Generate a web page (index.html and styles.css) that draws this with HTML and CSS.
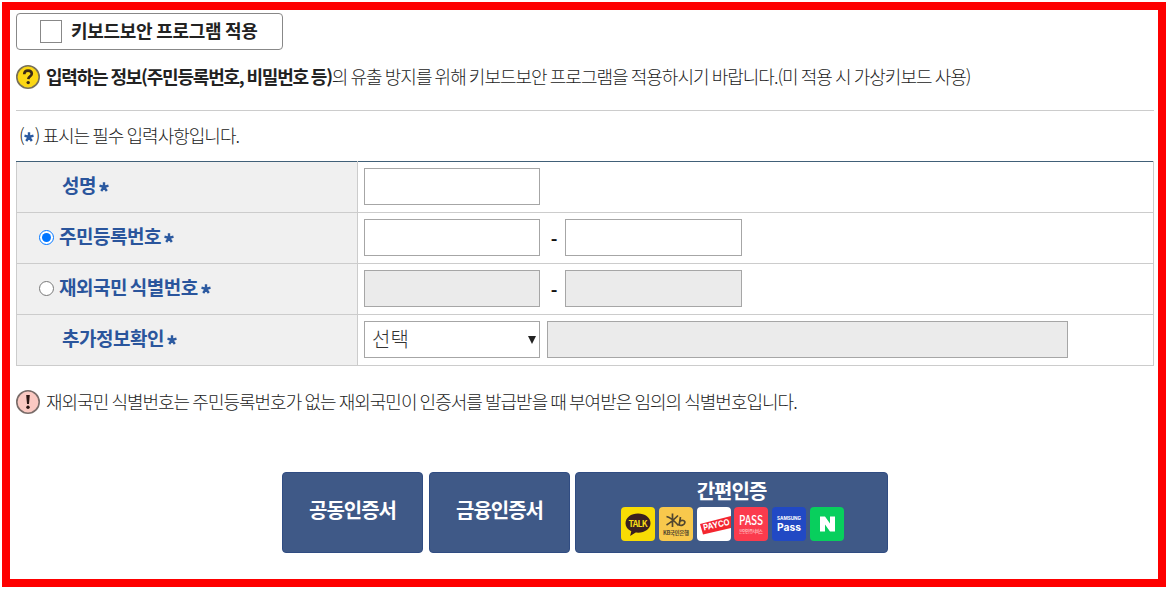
FILE: index.html
```html
<!DOCTYPE html>
<html lang="ko">
<head>
    <meta charset="UTF-8">
    <meta name="viewport" content="width=device-width, initial-scale=1.0">
    <title>본인확인</title>
    <link rel="stylesheet" href="styles.css">
</head>
<body>
    <div class="container">
        <!-- 키보드보안 -->
        <label class="security">
            <input type="checkbox" class="check">
            <span>키보드보안 프로그램 적용</span>
        </label>
        <div class="notice">
            <svg class="mark" viewBox="0 0 24 24">
                <circle cx="12" cy="12" r="11.2" fill="#fcd814" stroke="#77705a" stroke-width="1.6"/>
                <path d="M8.2 9.2C8.3 6.8 9.8 5.6 12 5.6c2.3 0 3.8 1.3 3.8 3.2 0 2.5-3.3 2.6-3.5 5.4" fill="none" stroke="#3a2a18" stroke-width="2.6"/>
                <circle cx="12.2" cy="17.6" r="1.7" fill="#3a2a18"/>
            </svg>
            <p><strong>입력하는 정보(주민등록번호, 비밀번호 등)</strong>의 유출 방지를 위해 키보드보안 프로그램을 적용하시기 바랍니다.(미 적용 시 가상키보드 사용)</p>
        </div>

        <p class="required">(<svg class="star" viewBox="0 0 10 10"><path d="M5 5V.3M5 5L.5 3.7M5 5l4.5-1.3M5 5L2.2 9M5 5l2.8 4"/></svg>) 표시는 필수 입력사항입니다.</p>

        <!-- 입력 폼 -->
        <table class="form">
            <tr>
                <th class="indent"><span>성명</span><svg class="star" viewBox="0 0 10 10"><path d="M5 5V.3M5 5L.5 3.7M5 5l4.5-1.3M5 5L2.2 9M5 5l2.8 4"/></svg></th>
                <td><div class="fields"><input type="text" class="field"></div></td>
            </tr>
            <tr>
                <th><label><input type="radio" name="idType" class="radio" checked><span>주민등록번호</span><svg class="star" viewBox="0 0 10 10"><path d="M5 5V.3M5 5L.5 3.7M5 5l4.5-1.3M5 5L2.2 9M5 5l2.8 4"/></svg></label></th>
                <td><div class="fields"><input type="text" class="field"><span class="dash">-</span><input type="text" class="field last"></div></td>
            </tr>
            <tr>
                <th><label><input type="radio" name="idType" class="radio"><span>재외국민 식별번호</span><svg class="star" viewBox="0 0 10 10"><path d="M5 5V.3M5 5L.5 3.7M5 5l4.5-1.3M5 5L2.2 9M5 5l2.8 4"/></svg></label></th>
                <td><div class="fields"><input type="text" class="field" disabled><span class="dash">-</span><input type="text" class="field last" disabled></div></td>
            </tr>
            <tr>
                <th class="indent"><span>추가정보확인</span><svg class="star" viewBox="0 0 10 10"><path d="M5 5V.3M5 5L.5 3.7M5 5l4.5-1.3M5 5L2.2 9M5 5l2.8 4"/></svg></th>
                <td><div class="fields">
                    <button type="button" class="field select"><span>선택</span><svg width="8" height="8" viewBox="0 0 8 8"><path d="M0 0h8L4 8z" fill="#222"/></svg></button>
                    <input type="text" class="field wide" disabled>
                </div></td>
            </tr>
        </table>

        <div class="notice info">
            <svg class="mark" viewBox="0 0 24 24">
                <circle cx="12" cy="12" r="11.2" fill="#fbc9c2" stroke="#796c69" stroke-width="1.6"/>
                <path d="M10.2 5h3.6l-.8 9h-2z" fill="#2b1512"/>
                <circle cx="12" cy="17.2" r="1.7" fill="#2b1512"/>
            </svg>
            <p>재외국민 식별번호는 주민등록번호가 없는 재외국민이 인증서를 발급받을 때 부여받은 임의의 식별번호입니다.</p>
        </div>

        <!-- 인증 버튼 -->
        <div class="buttons">
            <button type="button" class="btn">공동인증서</button>
            <button type="button" class="btn">금융인증서</button>
            <button type="button" class="btn simple">
                <span>간편인증</span>
                <span class="logos">
                    <svg class="logo talk" viewBox="0 0 34 34">
                        <path d="M17 6.5c-7 0-12.5 4.2-12.5 9.7 0 3.6 2.2 6.4 5.8 8l-1.2 4.9 5.6-3.6c8.3 1 14.8-3.4 14.800-9.300 0-5.500-5.500-9.700-12.500-9.700z" fill="#3a2020"/>
                        <text x="17" y="19.5" font-size="8.5" textLength="19" fill="#f8dc18">TALK</text>
                    </svg>
                    <svg class="logo kb" viewBox="0 0 34 34">
                        <path d="M13.5 6.5v13.5M7.5 9.5c4 1 8 4.5 12 9M19 8.5c-3 3-7 7-11.5 9.5M21.500 10l-1.500 8.500M20.500 14.500c2.500-2 5.800-1.200 5.300 1.300s-3.800 3-5.800 2.200" fill="none" stroke="#51462f" stroke-width="1.7"/>
                        <text x="17" y="28" font-size="5.5" textLength="26" fill="#51462f">KB국민은행</text>
                    </svg>
                    <svg class="logo payco" viewBox="0 0 34 34">
                        <path d="M3 17L38 8v12L6 27.5z" fill="#f4262f"/>
                        <text class="latin" x="19.500" y="20.500" font-size="8.500" textLength="27" lengthAdjust="spacingAndGlyphs" transform="rotate(-13 20 18)" fill="#fff">PAYCO</text>
                    </svg>
                    <svg class="logo pass" viewBox="0 0 34 34">
                        <text class="medium" x="17" y="18" font-size="12.5" textLength="24" lengthAdjust="spacingAndGlyphs" fill="#fff">PASS</text>
                        <text class="medium" x="17" y="25.5" font-size="4.5" textLength="24" fill="#ffc4c8">본인인증서비스</text>
                    </svg>
                    <svg class="logo samsung" viewBox="0 0 34 34">
                        <text class="latin" x="17" y="13" font-size="4.5" textLength="24" lengthAdjust="spacingAndGlyphs" fill="#fff">SAMSUNG</text>
                        <text class="latin" x="17" y="24" font-size="10" textLength="24" lengthAdjust="spacingAndGlyphs" fill="#fff">Pass</text>
                    </svg>
                    <svg class="logo naver" viewBox="0 0 34 34">
                        <path d="M10 24.5v-15h5l5 7v-7h5v15h-5l-5-7v7z" fill="#fff"/>
                    </svg>
                </span>
            </button>
        </div>
    </div>
</body>
</html>
```
FILE: styles.css
```css
* {
    box-sizing: border-box;
}
body {
    margin: 0;
    padding: 2px;
    background: #fff;
    color: #222;
    font-family: "Noto Sans CJK KR", sans-serif;
    font-size: 18px;
    font-weight: 300;
    letter-spacing: -1px;
    word-spacing: -0.9px;
}
p {
    margin: 0;
}
.container {
    width: 1164px;
    height: 585px;
    padding: 3px 4px 0 6px;
    border: 8px solid #fe0000;
}
.security {
    display: flex;
    align-items: center;
    width: 267px;
    height: 37px;
    padding: 0 0 0 23px;
    border: 1px solid #888;
    border-radius: 4px;
    color: #222;
    font-weight: 700;
    letter-spacing: -0.3px;
}
.security span {
    margin-top: -4px;
}
.check {
    appearance: none;
    width: 22px;
    height: 23px;
    margin: 0 9px 0 0;
    border: 1px solid #888;
    background: #fff;
}
.notice {
    display: flex;
    align-items: center;
    gap: 6px;
    height: 61px;
    padding-bottom: 7px;
    border-bottom: 1px solid #ccc;
    white-space: nowrap;
}
.notice p {
    margin-top: -2px;
}
.notice strong {
    font-weight: 700;
    letter-spacing: -1.2px;
}
.mark {
    width: 24px;
    height: 24px;
    flex: none;
}
.required {
    height: 50px;
    padding-left: 3px;
    line-height: 49px;
}
.star {
    width: 10px;
    height: 10px;
    fill: none;
    stroke: #2c5aa0;
    stroke-width: 2.4;
}
.required .star {
    margin: 0 1px 1px 0;
}
.form {
    width: 1138px;
    border-collapse: collapse;
    table-layout: fixed;
}
.form tr {
    height: 51px;
    border-top: 1px solid #ccc;
}
.form th, .form td {
    padding: 0 0 2px;
    border: 1px solid #ccc;
    text-align: left;
}
.form tr:first-child, .form tr:first-child th, .form tr:first-child td {
    border-top-color: #416078;
}
.form th {
    width: 341px;
    padding: 0 0 4px 22px;
    background: #f0f0f0;
    color: #2a559c;
    font-size: 19px;
    font-weight: 700;
    letter-spacing: -0.5px;
    word-spacing: -2px;
    line-height: 28px;
}
.form th.indent {
    padding-left: 45px;
}
.form th label {
    display: flex;
    align-items: center;
}
.form th .star {
    margin: 0 0 1px 3px;
}
.form th label .star {
    margin: 4px 0 0 3px;
}
.radio {
    width: 15px;
    height: 15px;
    margin: 3px 5px 0 0;
}
.fields {
    display: flex;
    align-items: center;
    padding-left: 6px;
}
.field {
    width: 176px;
    height: 37px;
    border: 1px solid #a6a6a6;
    border-radius: 0;
    background: #fff;
}
.field:disabled {
    background: #ebebeb;
}
.field.last {
    width: 177px;
}
.dash {
    width: 25px;
    padding: 3px 0 0 2px;
    color: #111;
    font-weight: 700;
    text-align: center;
}
.select {
    display: flex;
    align-items: center;
    justify-content: space-between;
    padding: 0 3px 2px 7px;
    color: #333;
    font: inherit;
    font-size: 20px;
    letter-spacing: 0;
}
.select svg {
    margin-top: 3px;
}
.field.wide {
    width: 521px;
    margin-left: 7px;
}
.info {
    height: 72px;
    padding-bottom: 0;
    border-bottom: 0;
}
.buttons {
    display: flex;
    gap: 6px;
    margin: 34px 0 0 266px;
}
.btn {
    width: 141px;
    height: 81px;
    padding: 0 0 7px;
    border: 1px solid #304c82;
    border-radius: 4px;
    background: #3f5987;
    color: #fff;
    font: inherit;
    font-size: 20px;
    font-weight: 700;
    letter-spacing: -1px;
}
.simple {
    display: flex;
    flex-direction: column;
    align-items: center;
    width: 313px;
    margin-left: -1px;
    padding: 5px 0 0;
    line-height: 26px;
}
.logos {
    display: flex;
    gap: 3.8px;
    margin: 3px 0 0 2px;
}
.logo {
    width: 34px;
    height: 34px;
    border-radius: 4px;
    font-family: "Noto Sans CJK KR", sans-serif;
    letter-spacing: 0;
    text-anchor: middle;
}
.logo .medium {
    font-weight: 500;
}
.logo .latin {
    font-family: "Inter", sans-serif;
}
.talk {
    background: #f8dc04;
}
.kb {
    background: #f8c84c;
}
.payco {
    background: #fff;
}
.pass {
    background: #fb3b4d;
}
.samsung {
    background: #2149c4;
}
.naver {
    background: #08cf5d;
}
```
